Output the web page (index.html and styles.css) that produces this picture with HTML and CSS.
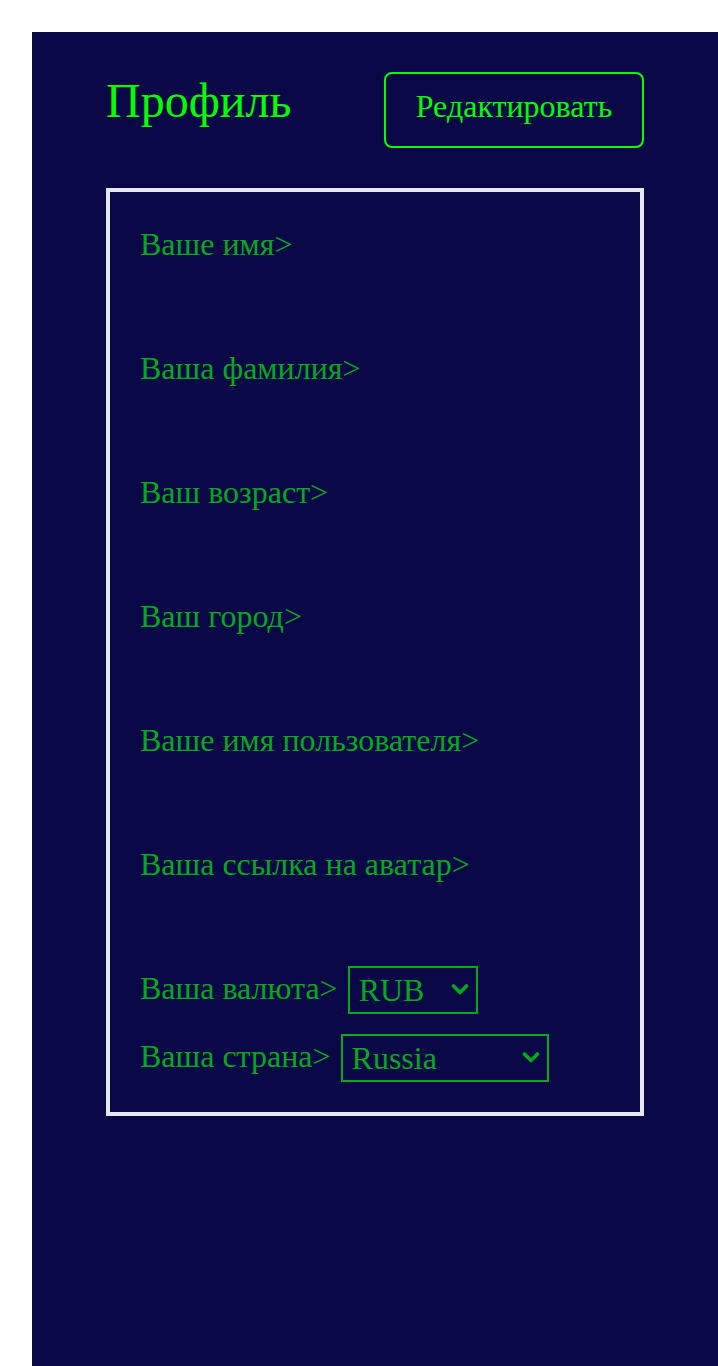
FILE: index.html
```html
<!DOCTYPE html>
<html lang="ru">
<head>
<meta charset="utf-8">
<title>Профиль</title>
<link rel="stylesheet" href="styles.css">
</head>
<body>
<div class="panel">
  <div class="content">
    <div class="header">
      <h1 class="title">Профиль</h1>
      <button class="edit-btn" type="button">Редактировать</button>
    </div>
    <div class="card">
      <div class="field">Ваше имя&gt;</div>
      <div class="field">Ваша фамилия&gt;</div>
      <div class="field">Ваш возраст&gt;</div>
      <div class="field">Ваш город&gt;</div>
      <div class="field">Ваше имя пользователя&gt;</div>
      <div class="field">Ваша ссылка на аватар&gt;</div>
      <div class="select-row first">
        <span class="label">Ваша валюта&gt;</span>
        <span class="select-wrap">
          <select class="choice currency">
            <option>RUB</option>
            <option>USD</option>
            <option>EUR</option>
          </select>
          <svg class="chevron" viewBox="0 0 18 13" width="18" height="13" aria-hidden="true">
            <polyline points="2.5,3 9,9.5 15.5,3" fill="none" stroke="#00aa1a" stroke-width="3.6" stroke-linecap="round" stroke-linejoin="round"/>
          </svg>
        </span>
      </div>
      <div class="select-row">
        <span class="label">Ваша страна&gt;</span>
        <span class="select-wrap">
          <select class="choice country">
            <option>Russia</option>
            <option>Belarus</option>
            <option>Kazakhstan</option>
          </select>
          <svg class="chevron" viewBox="0 0 18 13" width="18" height="13" aria-hidden="true">
            <polyline points="2.5,3 9,9.5 15.5,3" fill="none" stroke="#00aa1a" stroke-width="3.6" stroke-linecap="round" stroke-linejoin="round"/>
          </svg>
        </span>
      </div>
    </div>
  </div>
</div>
</body>
</html>
```
FILE: styles.css
```css
html, body {
  margin: 0;
  padding: 0;
  background: #ffffff;
  overflow: hidden;
}

body {
  padding: 32px 0 0 32px;
  font-family: "Liberation Serif", "Times New Roman", serif;
}

.panel {
  width: 686px;
  height: 1334px;
  background: #0a0747;
  padding: 40px 0 0 74px;
  box-sizing: border-box;
}

.content {
  width: 538px;
}

.header {
  display: flex;
  justify-content: space-between;
  align-items: baseline;
}

.title {
  margin: 0;
  font-size: 48px;
  font-weight: normal;
  color: #00ff00;
}

.edit-btn {
  font-family: "Liberation Serif", "Times New Roman", serif;
  font-size: 32px;
  color: #00ff00;
  background: transparent;
  border: 2px solid #00ff00;
  border-radius: 8px;
  padding: 12px 29px 20px;
  line-height: normal;
  height: 76px;
  width: 260px;
  box-sizing: border-box;
}

.card {
  margin-top: 40px;
  border: 4px solid #e6e6ee;
  padding: 34px 30px 30px;
  display: flex;
  flex-direction: column;
  gap: 87px;
  color: #00aa1a;
  font-size: 32px;
}

.field {
  line-height: 37px;
}

.select-row {
  display: flex;
  align-items: center;
  gap: 10px;
  height: 48px;
}

.select-row.first {
  margin-top: -4px;
}

.select-row + .select-row {
  margin-top: -67px;
}

.label {
  line-height: 37px;
  margin-top: -4px;
}

.select-wrap {
  position: relative;
  display: block;
  height: 48px;
}

.choice {
  -webkit-appearance: none;
  appearance: none;
  display: block;
  font-family: "Liberation Serif", "Times New Roman", serif;
  font-size: 32px;
  line-height: 44px;
  color: #00aa1a;
  background: transparent;
  border: 2px solid #00aa1a;
  border-radius: 0;
  height: 48px;
  box-sizing: border-box;
  padding: 0 9px;
  margin: 0;
}

.chevron {
  position: absolute;
  right: 9px;
  top: 17px;
  pointer-events: none;
}

.currency {
  width: 130px;
}

.country {
  width: 208px;
}
```
